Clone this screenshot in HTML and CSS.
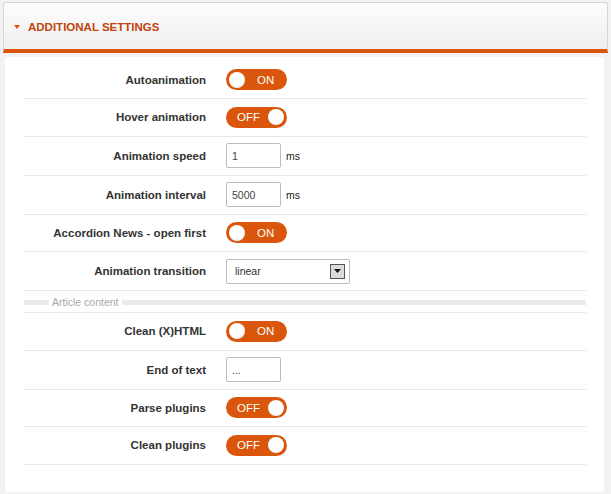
FILE: index.html
```html
<!DOCTYPE html>
<html>
<head>
<meta charset="utf-8">
<link rel="stylesheet" href="styles.css">
</head>
<body>
<div class="header">
  <span class="caret"></span>
  <span class="title">Additional settings</span>
</div>
<div class="panel">
  <div class="row first"><div class="label">Autoanimation</div><div class="ctrl"><span class="toggle on"><span class="knob"></span><span class="tt">ON</span></span></div></div>
  <div class="row"><div class="label">Hover animation</div><div class="ctrl"><span class="toggle off"><span class="tt">OFF</span><span class="knob"></span></span></div></div>
  <div class="row tall"><div class="label">Animation speed</div><div class="ctrl"><span class="input">1</span><span class="unit">ms</span></div></div>
  <div class="row tall"><div class="label">Animation interval</div><div class="ctrl"><span class="input">5000</span><span class="unit">ms</span></div></div>
  <div class="row"><div class="label">Accordion News - open first</div><div class="ctrl"><span class="toggle on"><span class="knob"></span><span class="tt">ON</span></span></div></div>
  <div class="row tall"><div class="label">Animation transition</div><div class="ctrl"><span class="select"><span class="sv">linear</span><span class="arrow"><svg width="7" height="4" viewBox="0 0 7 4"><path d="M0 0h7L3.5 4z" fill="#111"/></svg></span></span></div></div>
  <div class="section"><span class="bar"></span><span class="stext">Article content</span></div>
  <div class="row"><div class="label">Clean (X)HTML</div><div class="ctrl"><span class="toggle on"><span class="knob"></span><span class="tt">ON</span></span></div></div>
  <div class="row tall"><div class="label">End of text</div><div class="ctrl"><span class="input">...</span></div></div>
  <div class="row"><div class="label">Parse plugins</div><div class="ctrl"><span class="toggle off"><span class="tt">OFF</span><span class="knob"></span></span></div></div>
  <div class="row"><div class="label">Clean plugins</div><div class="ctrl"><span class="toggle off"><span class="tt">OFF</span><span class="knob"></span></span></div></div>
</div>
</body>
</html>
```
FILE: styles.css
```css
html, body { margin: 0; padding: 0; }
body {
  background: #f2f2f2;
  font-family: "Liberation Sans", Arial, sans-serif;
  width: 611px;
  height: 494px;
  overflow: hidden;
}
.header {
  margin: 2px 3px 0 3px;
  height: 46px;
  border: 1px solid #d6d6d6;
  border-bottom: 4px solid #d9560c;
  border-radius: 3px 3px 0 0;
  background: linear-gradient(#fdfdfd, #efefef);
  display: flex;
  align-items: center;
  padding-left: 10px;
  box-sizing: content-box;
}
.caret {
  width: 0; height: 0;
  border-left: 3px solid transparent;
  border-right: 3px solid transparent;
  border-top: 4px solid #d9560c;
  margin-right: 8px;
  margin-top: 2px;
}
.title {
  color: #c0440e;
  font-weight: bold;
  font-size: 11.5px;
  text-transform: uppercase;
  margin-top: 2px;
}
.panel {
  margin: 4px 7px 0 5px;
  background: #fff;
  border-radius: 3px;
  padding: 4px 18px 27px 19px;
}
.row {
  display: flex;
  align-items: center;
  height: 36.5px;
  border-bottom: 1px solid #e8e8e8;
}
.row.first { height: 37px; }
.row.tall { height: 38px; }
.label {
  width: 182px;
  text-align: right;
  font-weight: bold;
  font-size: 11.5px;
  color: #333;
  padding-right: 20px;
}
.ctrl { display: flex; align-items: center; }
.toggle {
  width: 61px;
  height: 21px;
  border-radius: 11px;
  background: #d9560c;
  display: flex;
  align-items: center;
  box-sizing: border-box;
  padding: 0 3px;
  color: #fff;
  font-size: 11.5px;
}
.knob {
  width: 16px; height: 16px;
  border-radius: 50%;
  background: radial-gradient(circle at 50% 40%, #fff 55%, #e6e6e6);
}
.toggle.on .tt { margin-left: 12px; }
.toggle.off .tt { margin-left: 8px; margin-right: auto; }
.input {
  width: 55px;
  height: 25px;
  box-sizing: border-box;
  border: 1px solid #bdbdbd;
  border-radius: 2px;
  font-size: 10.5px;
  color: #444;
  padding-left: 5px;
  display: flex;
  align-items: center;
}
.unit { font-size: 10.5px; color: #222; margin-left: 5px; }
.select {
  width: 124px;
  height: 25px;
  box-sizing: border-box;
  border: 1px solid #bdbdbd;
  border-radius: 2px;
  display: flex;
  align-items: center;
  padding-left: 8px;
  font-size: 10.5px;
  color: #333;
}
.sv { flex: 1; }
.arrow {
  width: 15px; height: 15px;
  box-sizing: border-box;
  border: 1px solid #555;
  background: #dcdcdc;
  display: flex;
  align-items: center;
  justify-content: center;
  margin-right: 4px;
}
.section {
  height: 21px;
  border-bottom: 1px solid #e8e8e8;
  position: relative;
  display: flex;
  align-items: center;
}
.bar {
  position: absolute;
  left: 0; right: 0;
  top: 9px;
  height: 5px;
  background: #ebebeb;
}
.stext {
  position: relative;
  margin-left: 25px;
  background: #fff;
  padding: 0 3px;
  font-size: 10.5px;
  color: #a8a8a8;
}
```
